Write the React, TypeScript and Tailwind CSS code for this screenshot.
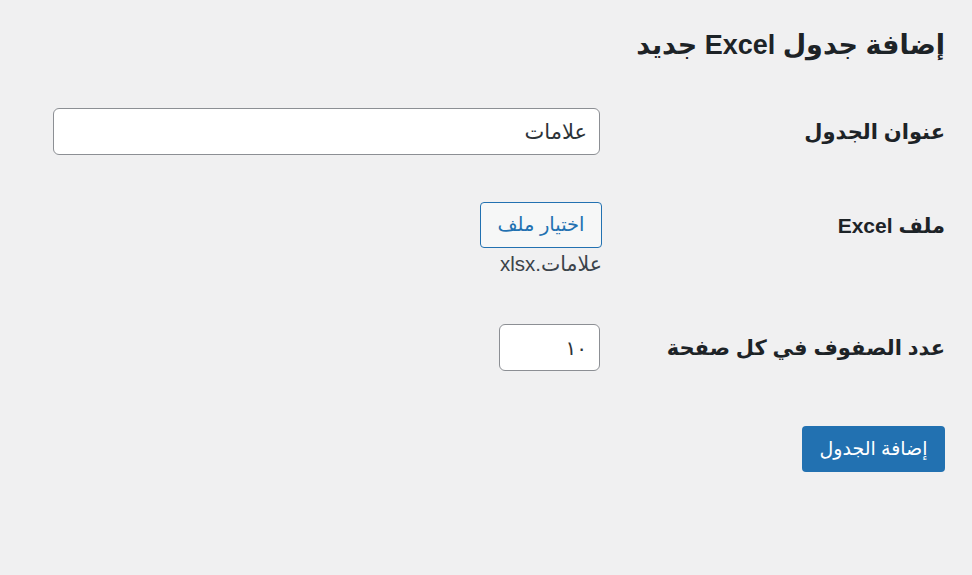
import { useState } from 'react';

export default function App() {
  const [title, setTitle] = useState('علامات');
  const [rows, setRows] = useState('١٠');

  return (
    <div
      dir="rtl"
      className="min-h-[575px] w-full bg-[#f0f0f1] pr-[27px] text-[#1d2327]"
      style={{ fontFamily: '"Liberation Sans", "DejaVu Sans", sans-serif' }}
    >
      {/* Page title */}
      <h1 className="pt-[27px] text-[27px] font-bold leading-[36px]">إضافة جدول Excel جديد</h1>

      {/* Form */}
      <form className="mt-[45px]" onSubmit={(e) => e.preventDefault()}>
        <div className="grid grid-cols-[345px_1fr] items-center">
          <label htmlFor="table-title" className="text-[21px] font-bold">
            عنوان الجدول
          </label>
          <input
            id="table-title"
            type="text"
            value={title}
            onChange={(e) => setTitle(e.target.value)}
            className="h-[47px] w-[547px] rounded-[6px] border border-[#8c8f94] bg-white px-[12px] text-[21px] text-[#2c3338] outline-none"
          />
        </div>

        <div className="mt-[47px] grid grid-cols-[343px_1fr] items-start">
          <label className="pt-[8px] text-[21px] font-bold">ملف Excel</label>
          <div className="flex flex-col items-start">
            <button
              type="button"
              className="h-[46px] w-[122px] rounded-[4px] border border-[#2271b1] bg-[#f6f7f7] text-[19.5px] text-[#2271b1]"
            >
              اختيار ملف
            </button>
            <span className="mt-[5px] text-[20.5px] leading-[22px] text-[#3c434a]">علامات.xlsx</span>
          </div>
        </div>

        <div className="mt-[49px] grid grid-cols-[345px_1fr] items-center">
          <label htmlFor="rows-per-page" className="text-[21px] font-bold">
            عدد الصفوف في كل صفحة
          </label>
          <input
            id="rows-per-page"
            type="text"
            value={rows}
            onChange={(e) => setRows(e.target.value)}
            className="h-[47px] w-[101px] rounded-[6px] border border-[#8c8f94] bg-white px-[12px] text-[20px] text-[#2c3338] outline-none"
          />
        </div>

        <button
          type="submit"
          className="mt-[55px] h-[46px] w-[143px] rounded-[4px] bg-[#2271b1] text-[19px] text-white"
        >
          إضافة الجدول
        </button>
      </form>
    </div>
  );
}
